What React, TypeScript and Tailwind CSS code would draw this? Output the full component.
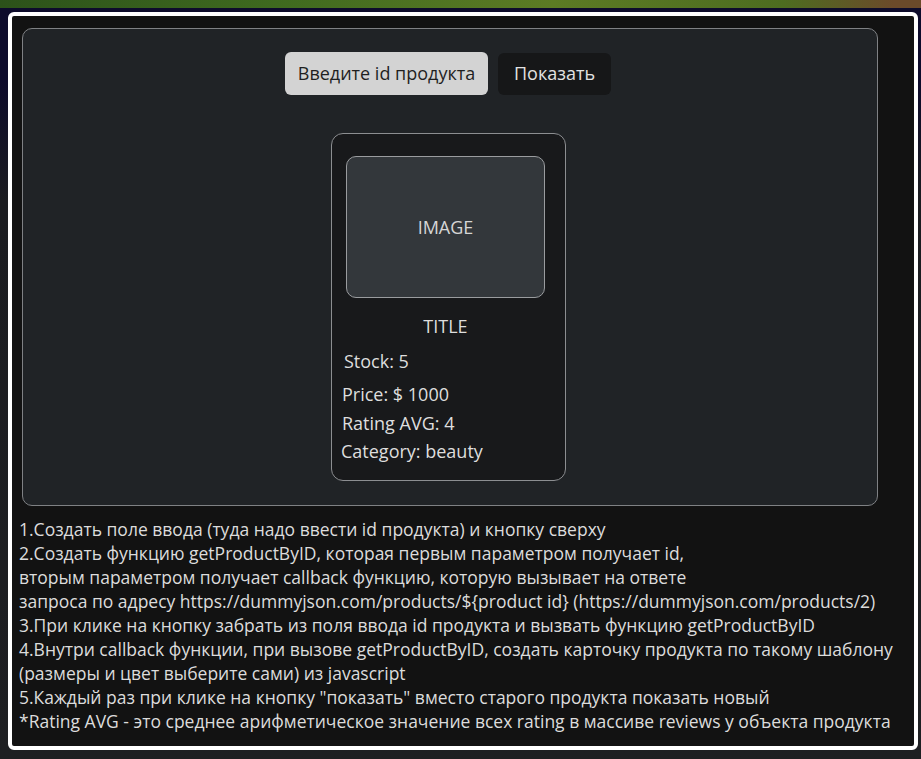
import React from 'react';

const lines = [
  '1.Создать поле ввода (туда надо ввести id продукта) и кнопку сверху',
  '2.Создать функцию getProductByID, которая первым параметром получает id,',
  'вторым параметром получает callback функцию, которую вызывает на ответе',
  'запроса по адресу https://dummyjson.com/products/${product id} (https://dummyjson.com/products/2)',
  '3.При клике на кнопку забрать из поля ввода id продукта и вызвать функцию getProductByID',
  '4.Внутри callback функции, при вызове getProductByID, создать карточку продукта по такому шаблону',
  '(размеры и цвет выберите сами) из javascript',
  '5.Каждый раз при клике на кнопку "показать" вместо старого продукта показать новый',
  '*Rating AVG - это среднее арифметическое значение всех rating в массиве reviews у объекта продукта',
];

const ProductCard = () => {
  return (
    <div className="w-[235px] h-[348px] rounded-[12px] border border-[#8c8e91] bg-[#18191b] pt-[22px] text-[#dedede]">
      <div className="ml-[14px] mr-[20px] h-[142px] rounded-[10px] border border-[#9a9c9f] bg-[#33373b] flex items-center justify-center text-[18px] text-[#d6d6d6]">
        IMAGE
      </div>
      <div className="mt-[16px] pr-[6px] text-center text-[18px] leading-[24px]">TITLE</div>
      <div className="mt-[11px] pl-[12px] text-[18px] leading-[24px]">Stock: 5</div>
      <div className="mt-[9px] pl-[10px] text-[18px] leading-[24px]">Price: $ 1000</div>
      <div className="mt-[5px] pl-[10px] text-[18px] leading-[24px]">Rating AVG: 4</div>
      <div className="mt-[4px] pl-[9px] text-[18px] leading-[24px]">Category: beauty</div>
    </div>
  );
};

export default function App() {
  return (
    <div
      className="w-[921px] h-[759px] overflow-hidden bg-[linear-gradient(to_bottom,#0d0b2b_0px,#0d0b2b_80px,#1b1c20_200px,#1e1f22_100%)]"
      style={{ fontFamily: '"Open Sans", "Noto Sans", sans-serif' }}
    >
      <div className="h-[8px] bg-[linear-gradient(to_right,#2c521a,#3f6a1f_30%,#5c7b24_60%,#4d6d20_85%,#6b4a2a_97%)]" />
      <div className="pl-[8px] pr-[3px] pt-[4px]">
        <div className="h-[738px] rounded-[6px] border-4 border-white bg-[#121212] pt-[12px] pl-[10px] pr-[36px]">
          <div className="h-[478px] rounded-[10px] border border-[#7f8184] bg-[#202326] flex flex-col items-center pt-[23px]">
            <div className="flex items-center gap-[10px] -ml-[4px]">
              <div className="w-[203px] h-[43px] rounded-[6px] bg-[#d3d3d3] flex items-center justify-center text-[18px] text-[#1f1f1f]">
                Введите id продукта
              </div>
              <button className="w-[113px] h-[42px] rounded-[6px] bg-[#161718] text-[18px] text-[#e2e2e2]">
                Показать
              </button>
            </div>
            <div className="mt-[38px] -ml-[3px]">
              <ProductCard />
            </div>
          </div>
          <div className="mt-[11px] -ml-[3px] text-[17.5px] leading-[24px] text-[#dcdcdc] whitespace-nowrap">
            {lines.map((l, i) => (
              <div key={i}>{l}</div>
            ))}
          </div>
        </div>
      </div>
    </div>
  );
}
